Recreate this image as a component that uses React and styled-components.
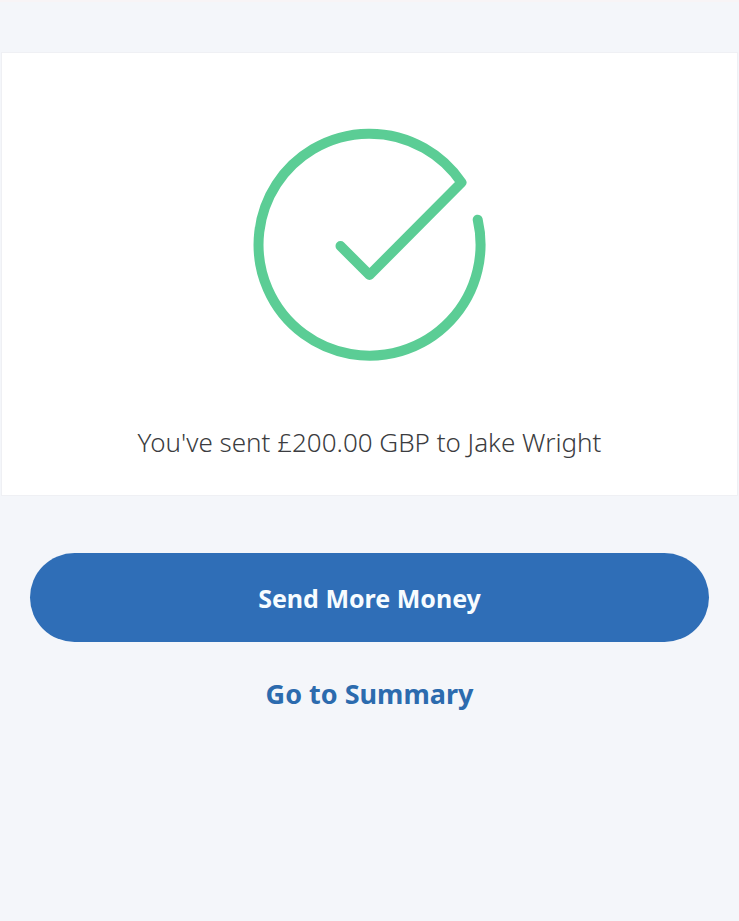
import React, { memo } from 'react'
import styled, { createGlobalStyle } from 'styled-components'

const GlobalStyle = createGlobalStyle`
  * {
    box-sizing: border-box;
  }

  body {
    margin: 0;
    background: #f4f6fa;
    font-family: 'Noto Sans', 'Open Sans', 'Liberation Sans', sans-serif;
  }
`

const PageWrapper = styled.main`
  min-height: 100vh;
  padding-top: 50px;
  border-top: 2px solid #f8f4f6;
  background: #f4f6fa;
`

const ConfirmationCard = styled.section`
  display: flex;
  flex-direction: column;
  align-items: center;
  gap: 63px;
  margin: 0 1px;
  padding: 74px 24px 35px;
  border: 1px solid #eff0f4;
  background: #fff;
`

const CheckIcon = styled.svg`
  display: block;
  width: 234px;
  height: 234px;
  fill: none;
  stroke: #5bcd95;
  stroke-width: 10px;
  stroke-linecap: round;
  stroke-linejoin: round;
`

const Message = styled.h1`
  margin: 0;
  color: #3b3c40;
  font-size: 26px;
  font-weight: 300;
  line-height: 36px;
  text-align: center;
`

const Actions = styled.div`
  display: flex;
  flex-direction: column;
  align-items: center;
  gap: 34px;
  padding: 57px 30px;
`

const PrimaryButton = styled.button`
  width: 100%;
  height: 89px;
  padding: 0 24px;
  border: 0;
  border-radius: 45px;
  background: #2f6eb7;
  color: #f7fcff;
  font-family: inherit;
  font-size: 25px;
  font-weight: 700;
  line-height: 36px;
  cursor: pointer;
`

const SummaryLink = styled.a`
  color: #2c6bae;
  font-size: 27px;
  font-weight: 700;
  line-height: 36px;
  text-decoration: none;
`

const SuccessCheck = memo(function SuccessCheck() {
  return (
    <CheckIcon viewBox="0 0 234 234" aria-hidden="true">
      <path d="M87.5 119 L116.5 148 L208.5 55.5 A111 111 0 1 0 224.7 92.7" />
    </CheckIcon>
  )
})

export default memo(function App() {
  return (
    <PageWrapper>
      <GlobalStyle />
      <ConfirmationCard>
        <SuccessCheck />
        <Message>You've sent £200.00 GBP to Jake Wright</Message>
      </ConfirmationCard>
      <Actions>
        <PrimaryButton type="button">Send More Money</PrimaryButton>
        <SummaryLink href="#summary">Go to Summary</SummaryLink>
      </Actions>
    </PageWrapper>
  )
})
